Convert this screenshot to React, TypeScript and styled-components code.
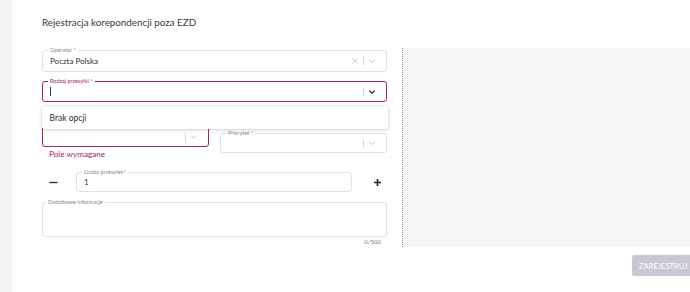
import React from 'react';
import styled, { createGlobalStyle } from 'styled-components';

const CRIMSON = '#9f2a51';
const BORDER = '#e2e2e6';

const GlobalStyle = createGlobalStyle`
  html, body { margin: 0; padding: 0; background: #fff; overflow: hidden; }
  body { font-family: Lato, "Open Sans", "Liberation Sans", sans-serif; }
  * { box-sizing: border-box; }
`;

const Page = styled.div`
  display: flex;
  width: 690px;
  height: 292px;
`;

const SideStrip = styled.div`
  width: 12px;
  flex-shrink: 0;
  background: #f4f4f6;
`;

const Main = styled.div`
  flex: 1;
  display: flex;
  flex-direction: column;
  padding: 16px 0 0 30px;
  background: #fff;
`;

const Title = styled.h1`
  margin: 0;
  height: 12px;
  font-size: 9.8px;
  line-height: 12px;
  font-weight: 400;
  color: #3b3b3b;
`;

const Content = styled.div`
  display: flex;
  height: 199px;
  margin-top: 20px;
`;

const FormCol = styled.div`
  width: 345px;
  flex-shrink: 0;
  display: flex;
  flex-direction: column;
  padding-top: 2px;
`;

const Preview = styled.div`
  flex: 1;
  margin-left: 15px;
  background: #f6f6f8;
  border-left: 1px dotted #8a8a8a;
`;

const Field = styled.div<{ $h: number; $error?: boolean; $mt?: number }>`
  position: relative;
  height: ${(p) => p.$h}px;
  margin-top: ${(p) => p.$mt ?? 0}px;
  display: flex;
  align-items: center;
  padding-left: 7px;
  border: ${(p) => (p.$error ? `1.5px solid ${CRIMSON}` : `1px solid ${BORDER}`)};
  border-radius: 3px;
  background: #fff;
`;

const FieldLabel = styled.span<{ $error?: boolean; $left?: number }>`
  position: absolute;
  top: -4px;
  left: ${(p) => p.$left ?? 5}px;
  padding: 0 2px;
  background: #fff;
  font-size: 5.5px;
  line-height: 7px;
  color: ${(p) => (p.$error ? CRIMSON : '#8a8a8a')};
  white-space: nowrap;
`;

const Value = styled.span`
  flex: 1;
  font-size: 8px;
  color: #2f2f2f;
`;

const Caret = styled.span`
  display: block;
  width: 1px;
  height: 9px;
  background: #333;
`;

const Spacer = styled.span`
  flex: 1;
`;

const Indicators = styled.div`
  display: flex;
  align-items: center;
  gap: 4px;
  padding-right: 10px;
`;

const Sep = styled.span`
  width: 1px;
  height: 8px;
  background: #d6d6d6;
`;

const IconBox = styled.span`
  display: flex;
  align-items: center;
  justify-content: center;
  width: 8px;
  height: 8px;
`;

const Chevron = ({ bold }: { bold?: boolean }) => (
  <IconBox>
    <svg width="8" height="8" viewBox="0 0 8 8">
      <path
        d={bold ? 'M1.6 3 L4 5.2 L6.4 3' : 'M1.2 2.8 L4 5.4 L6.8 2.8'}
        fill="none"
        stroke={bold ? '#333' : '#c4c4c4'}
        strokeWidth={bold ? 1.2 : 0.9}
        strokeLinecap="round"
        strokeLinejoin="round"
      />
    </svg>
  </IconBox>
);

const ClearIcon = () => (
  <IconBox>
    <svg width="8" height="8" viewBox="0 0 8 8">
      <path d="M1.8 1.8 L6.2 6.2 M6.2 1.8 L1.8 6.2" stroke="#c4c4c4" strokeWidth="0.9" strokeLinecap="round" />
    </svg>
  </IconBox>
);

const Menu = styled.div`
  position: absolute;
  top: calc(100% + 5px);
  left: -1.5px;
  right: -1.5px;
  height: 23px;
  display: flex;
  align-items: center;
  padding-left: 8px;
  background: #fff;
  border-radius: 3px;
  box-shadow: 0 1px 4px rgba(0, 0, 0, 0.16), 0 0 0 1px rgba(0, 0, 0, 0.04);
  font-size: 8.5px;
  color: #333;
  z-index: 5;
`;

const Pair = styled.div`
  display: grid;
  grid-template-columns: 1fr 1fr;
  column-gap: 11px;
  margin-top: 24px;
  align-items: start;
`;

const Column = styled.div`
  display: flex;
  flex-direction: column;
`;

const ErrorText = styled.div`
  height: 13px;
  padding-left: 7px;
  font-size: 8.2px;
  line-height: 14px;
  color: ${CRIMSON};
`;

const StepRow = styled.div`
  display: flex;
  align-items: center;
  margin-top: 12px;
`;

const StepButton = styled.button<{ $w: number; $ml: number; $mr: number }>`
  width: ${(p) => p.$w}px;
  height: 20px;
  margin-left: ${(p) => p.$ml}px;
  margin-right: ${(p) => p.$mr}px;
  padding: 0;
  display: flex;
  align-items: center;
  justify-content: center;
  border: none;
  background: transparent;
`;

const StepField = styled(Field)`
  flex: 1;
`;

const TextArea = styled(Field)`
  align-items: flex-start;
`;

const Counter = styled.div`
  margin-top: 1px;
  padding-right: 6px;
  text-align: right;
  font-size: 6px;
  line-height: 8px;
  color: #7a7a7a;
`;

const Footer = styled.div`
  display: flex;
  justify-content: flex-end;
  margin-top: 8px;
`;

const SubmitButton = styled.button`
  width: 58px;
  height: 21px;
  padding: 0 0 0 7px;
  border: none;
  border-radius: 2px 0 0 2px;
  background: #c9c7d4;
  color: #fff;
  text-align: left;
  white-space: nowrap;
  overflow: hidden;
  font-family: Lato, "Open Sans", sans-serif;
  font-size: 7.6px;
  letter-spacing: 0;
`;

export default function App() {
  return (
    <>
      <GlobalStyle />
      <Page>
        <SideStrip />
        <Main>
          <Title>Rejestracja korepondencji poza EZD</Title>
          <Content>
            <FormCol>
              <Field $h={22}>
                <FieldLabel>Operator *</FieldLabel>
                <Value>Poczta Polska</Value>
                <Indicators>
                  <ClearIcon />
                  <Sep />
                  <Chevron />
                </Indicators>
              </Field>

              <Field $h={21} $mt={9} $error>
                <FieldLabel $error>Rodzaj przesyłki *</FieldLabel>
                <Caret />
                <Spacer />
                <Indicators>
                  <Sep />
                  <Chevron bold />
                </Indicators>
                <Menu>Brak opcji</Menu>
              </Field>

              <Pair>
                <Column>
                  <Field $h={21} $error>
                    <Spacer />
                    <Indicators>
                      <Sep />
                      <Chevron />
                    </Indicators>
                  </Field>
                  <ErrorText>Pole wymagane</ErrorText>
                </Column>
                <Column>
                  <Field $h={20} $mt={7}>
                    <FieldLabel>Priorytet *</FieldLabel>
                    <Spacer />
                    <Indicators>
                      <Sep />
                      <Chevron />
                    </Indicators>
                  </Field>
                </Column>
              </Pair>

              <StepRow>
                <StepButton $w={22} $ml={0} $mr={12} aria-label="minus">
                  <svg width="9" height="9" viewBox="0 0 9 9">
                    <path d="M0.5 4.5 H8.5" stroke="#333" strokeWidth="1.4" />
                  </svg>
                </StepButton>
                <StepField $h={20}>
                  <FieldLabel>Liczba przesyłek*</FieldLabel>
                  <Value>1</Value>
                </StepField>
                <StepButton $w={20} $ml={15} $mr={0} aria-label="plus">
                  <svg width="9" height="9" viewBox="0 0 9 9">
                    <path d="M1 4.5 H8 M4.5 1 V8" stroke="#222" strokeWidth="1.6" />
                  </svg>
                </StepButton>
              </StepRow>

              <TextArea $h={35} $mt={10}>
                <FieldLabel $left={3}>Dodatkowe informacje</FieldLabel>
              </TextArea>
              <Counter>0/500</Counter>
            </FormCol>
            <Preview />
          </Content>
          <Footer>
            <SubmitButton>ZAREJESTRUJ</SubmitButton>
          </Footer>
        </Main>
      </Page>
    </>
  );
}
